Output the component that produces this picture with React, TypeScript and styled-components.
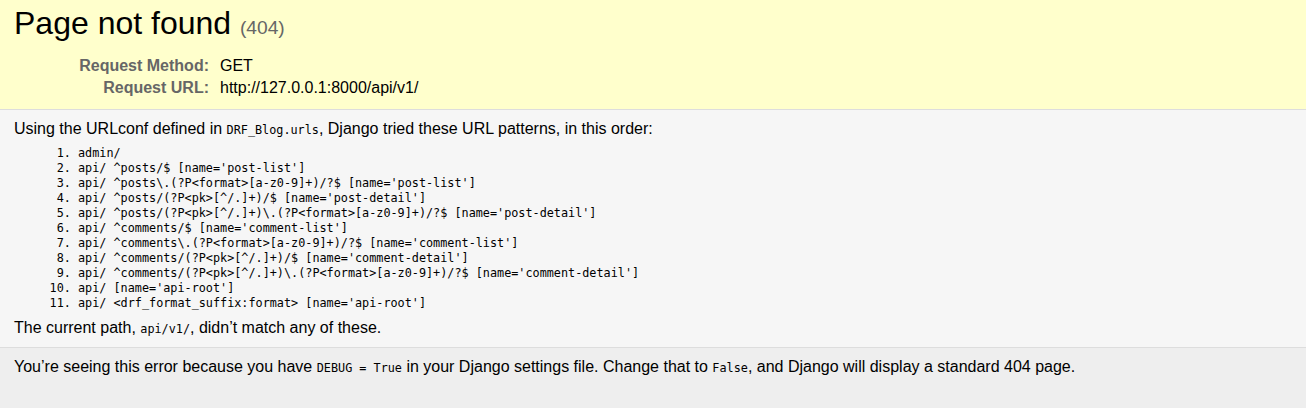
import styled, { createGlobalStyle } from "styled-components";

const GlobalStyle = createGlobalStyle`
  html, body {
    margin: 0;
    padding: 0;
  }
  body {
    background: #eee;
    color: #000;
    font-family: "Liberation Sans", Arial, sans-serif;
    font-size: 16px;
  }
`;

const Section = styled.div<{ $bg: string; $top?: number; $last?: boolean }>`
  background: ${(p) => p.$bg};
  padding: ${(p) => p.$top ?? 10}px 14px 10px;
  border-bottom: ${(p) => (p.$last ? "none" : "1px solid #ddd")};
`;

const Title = styled.h1`
  margin: 0 0 0.4em;
  font-size: 32px;
  font-weight: normal;
  line-height: normal;
`;

const Status = styled.span`
  font-size: 60%;
  color: #666;
`;

const Meta = styled.table`
  border: none;
  border-collapse: collapse;
  width: 100%;
`;

const Label = styled.th`
  width: 12em;
  text-align: right;
  vertical-align: top;
  color: #666;
  padding: 2px 0.5em 2px 3px;
`;

const Value = styled.td`
  vertical-align: top;
  padding: 2px 3px;
`;

const Para = styled.p`
  margin: 0;
`;

const Code = styled.code`
  font-family: "DejaVu Sans Mono", "Liberation Mono", monospace;
  font-size: 11.8px;
`;

const Patterns = styled.ol`
  margin: 0.5em 4em;
  padding: 0;
`;

const Pattern = styled.li`
  font-family: "DejaVu Sans Mono", "Liberation Mono", monospace;
  font-size: 11.8px;
  line-height: 15px;
`;

const patterns = [
  "admin/",
  "api/ ^posts/$ [name='post-list']",
  "api/ ^posts\\.(?P<format>[a-z0-9]+)/?$ [name='post-list']",
  "api/ ^posts/(?P<pk>[^/.]+)/$ [name='post-detail']",
  "api/ ^posts/(?P<pk>[^/.]+)\\.(?P<format>[a-z0-9]+)/?$ [name='post-detail']",
  "api/ ^comments/$ [name='comment-list']",
  "api/ ^comments\\.(?P<format>[a-z0-9]+)/?$ [name='comment-list']",
  "api/ ^comments/(?P<pk>[^/.]+)/$ [name='comment-detail']",
  "api/ ^comments/(?P<pk>[^/.]+)\\.(?P<format>[a-z0-9]+)/?$ [name='comment-detail']",
  "api/ [name='api-root']",
  "api/ <drf_format_suffix:format> [name='api-root']",
];

export default function App() {
  return (
    <>
      <GlobalStyle />
      <Section $bg="#ffc" $top={5}>
        <Title>
          Page not found <Status>(404)</Status>
        </Title>
        <Meta>
          <tbody>
            <tr>
              <Label>Request Method:</Label>
              <Value>GET</Value>
            </tr>
            <tr>
              <Label>Request URL:</Label>
              <Value>http://127.0.0.1:8000/api/v1/</Value>
            </tr>
          </tbody>
        </Meta>
      </Section>
      <Section $bg="#f6f6f6">
        <Para>
          Using the URLconf defined in <Code>DRF_Blog.urls</Code>, Django tried these URL
          patterns, in this order:
        </Para>
        <Patterns>
          {patterns.map((p, i) => (
            <Pattern key={i}>{p}</Pattern>
          ))}
        </Patterns>
        <Para>
          The current path, <Code>api/v1/</Code>, didn’t match any of these.
        </Para>
      </Section>
      <Section $bg="#eee" $last>
        <Para>
          You’re seeing this error because you have <Code>DEBUG = True</Code> in your Django
          settings file. Change that to <Code>False</Code>, and Django will display a standard
          404 page.
        </Para>
      </Section>
    </>
  );
}
